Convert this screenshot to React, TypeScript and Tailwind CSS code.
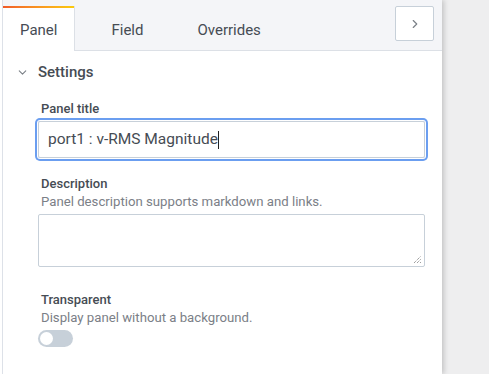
import { ChevronDown, ChevronRight } from "lucide-react";

const Label = ({ title, hint }: { title: string; hint?: string }) => {
  return (
    <div className="pl-[3px]">
      <div className="text-[13px] leading-[16px] font-medium text-[#464c54]">{title}</div>
      {hint && <div className="mt-[2px] text-[13.2px] leading-[16px] text-[#7b8087]">{hint}</div>}
    </div>
  );
};

const App = () => {
  return (
    <div className="w-[489px] h-[374px] flex bg-[#ededee] overflow-hidden" style={{ fontFamily: "Roboto, 'Liberation Sans', sans-serif" }}>
      <div className="w-[442px] h-full bg-white pl-[2px] shadow-[2px_0_5px_rgba(0,0,0,0.18)] relative z-10">
        <div className="h-full border-l border-[#dde1e8] flex flex-col">
          {/* tabs */}
          <div className="h-[51px] shrink-0 bg-[#f4f5f8] border-b border-[#dce0e6] flex items-end relative">
            <div className="h-[45px] -mb-px bg-white border-r border-[#dce0e6] px-[17px] flex items-center text-[15px] text-[#464c54] relative">
              <div className="absolute left-0 right-0 top-0 h-[2px] bg-gradient-to-r from-[#f05a28] to-[#fbca0a]" />
              <span className="pt-[4px]">Panel</span>
            </div>
            <div className="h-[44px] flex items-center ml-[36px] text-[15px] text-[#464c54]">
              <span className="pt-[4px]">Field</span>
            </div>
            <div className="h-[44px] flex items-center ml-[54px] text-[15px] text-[#464c54]">
              <span className="pt-[4px]">Overrides</span>
            </div>
            <button className="absolute left-[392px] top-[6px] w-[39px] h-[35px] bg-white border border-[#c7d0d9] rounded-[2px] flex items-center justify-center text-[#7b8087]">
              <ChevronRight size={14} strokeWidth={2} />
            </button>
          </div>

          {/* settings header */}
          <div className="h-[43px] flex items-center pl-[13px] gap-[9px] text-[#464c54]">
            <ChevronDown size={13} strokeWidth={2} className="text-[#7b8087]" />
            <span className="text-[15px] font-medium">Settings</span>
          </div>

          <div className="pl-[35px] w-[422px] flex flex-col">
            <div className="mt-[7px]">
              <Label title="Panel title" />
            </div>
            <div className="mt-[4px] h-[37px] border border-[#c7d0d9] rounded-[2px] shadow-[0_0_0_1px_#fff,0_0_0_3px_#6b9ef0] flex items-center pl-[9px] text-[15.5px] text-[#464c54]">
              <span>port1 : v-RMS Magnitude</span>
              <span className="w-px h-[18px] bg-[#222]" />
            </div>

            <div className="mt-[18px]">
              <Label title="Description" hint="Panel description supports markdown and links." />
            </div>
            <div className="mt-[4px] h-[53px] border border-[#c7d0d9] rounded-[2px] relative">
              <svg className="absolute right-[2px] bottom-[2px]" width="9" height="9" viewBox="0 0 9 9">
                <path d="M1 8 L8 1 M4 8 L8 4 M7 8 L8 7" stroke="#777" strokeWidth="1" strokeDasharray="1 1" />
              </svg>
            </div>

            <div className="mt-[25px]">
              <Label title="Transparent" hint="Display panel without a background." />
            </div>
            <div className="mt-[4px] w-[35px] h-[17px] rounded-full bg-[#c7d0d9] relative">
              <div className="absolute left-[2px] top-[2px] w-[13px] h-[13px] rounded-full bg-white" />
            </div>
          </div>
        </div>
      </div>
      <div className="flex-1 bg-[#eeeeef]" />
    </div>
  );
};

export default App;
